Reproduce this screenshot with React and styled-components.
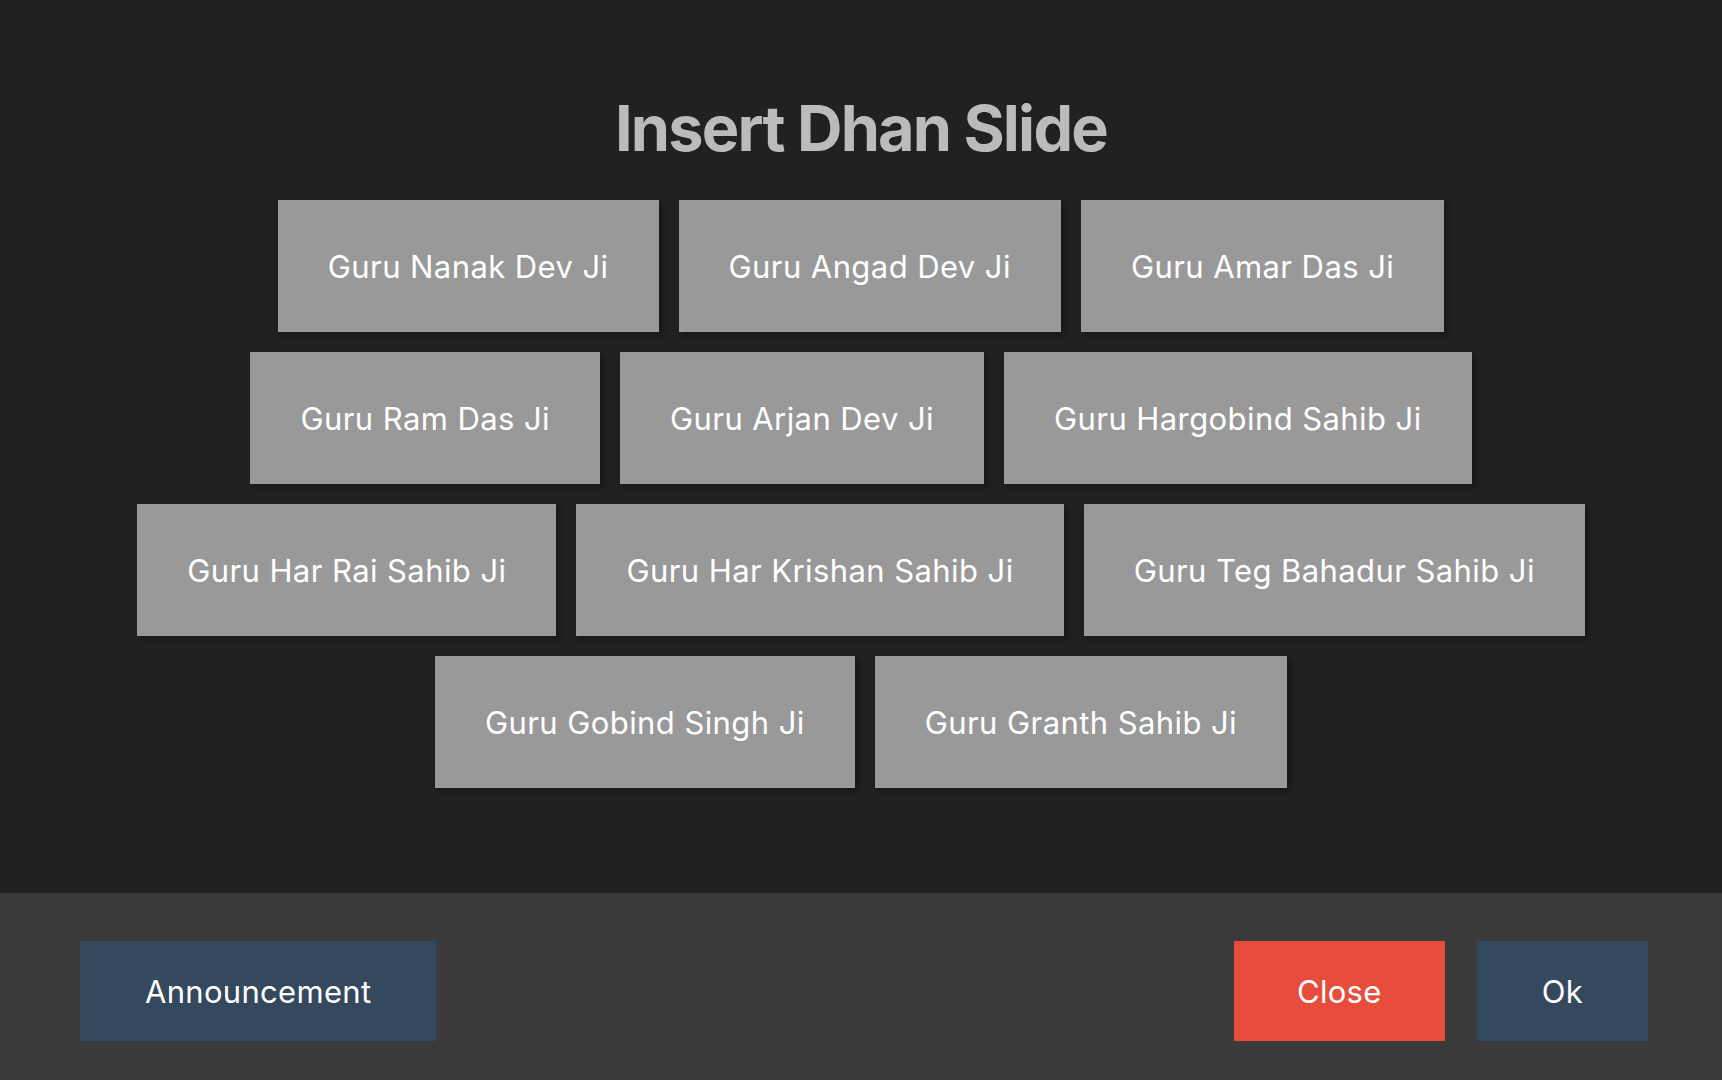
import styled, { createGlobalStyle } from 'styled-components'

const GlobalStyle = createGlobalStyle`
  html, body {
    margin: 0;
    padding: 0;
    background: #212121;
    font-family: Inter, 'Noto Sans', sans-serif;
  }
`

const gurus = [
  'Guru Nanak Dev Ji',
  'Guru Angad Dev Ji',
  'Guru Amar Das Ji',
  'Guru Ram Das Ji',
  'Guru Arjan Dev Ji',
  'Guru Hargobind Sahib Ji',
  'Guru Har Rai Sahib Ji',
  'Guru Har Krishan Sahib Ji',
  'Guru Teg Bahadur Sahib Ji',
  'Guru Gobind Singh Ji',
  'Guru Granth Sahib Ji'
]

export default function App() {
  return (
    <>
      <GlobalStyle />
      <Page>
        <Main>
          <Title>Insert Dhan Slide</Title>
          <Grid>
            {gurus.map(name => (
              <GuruBtn key={name}>{name}</GuruBtn>
            ))}
          </Grid>
        </Main>
        <Footer>
          <ActionBtn $variant="blue">Announcement</ActionBtn>
          <Right>
            <ActionBtn $variant="red">Close</ActionBtn>
            <ActionBtn $variant="blue">Ok</ActionBtn>
          </Right>
        </Footer>
      </Page>
    </>
  )
}

const Page = styled.div`
  height: 100vh;
  display: flex;
  flex-direction: column;
`

const Main = styled.div`
  flex: 1;
  display: flex;
  flex-direction: column;
  align-items: center;
  background: #212121;
`

const Title = styled.h1`
  margin: 90px 0 0;
  height: 110px;
  font-size: 63px;
  line-height: 76px;
  font-weight: 700;
  letter-spacing: -1.8px;
  color: #bbbbbb;
`

const Grid = styled.div`
  width: 1490px;
  display: flex;
  flex-wrap: wrap;
  justify-content: center;
  gap: 20px;
`

const GuruBtn = styled.button`
  height: 132px;
  padding: 0 50px;
  border: none;
  background: #999999;
  color: #ffffff;
  font-family: Inter, 'Noto Sans', sans-serif;
  font-size: 31px;
  letter-spacing: 0.42px;
  box-shadow: 3px 3px 6px rgba(0, 0, 0, 0.35);
  cursor: pointer;
`

const Footer = styled.div`
  height: 187px;
  box-sizing: border-box;
  background: #3a3a3a;
  display: flex;
  align-items: flex-start;
  justify-content: space-between;
  padding: 48px 74px 0 80px;
`

const Right = styled.div`
  display: flex;
  gap: 32px;
`

const ActionBtn = styled.button`
  height: 100px;
  padding: 0 ${p => (p.$variant === 'red' ? '63px' : '65px')};
  border: none;
  background: ${p => (p.$variant === 'red' ? '#e74c3c' : '#34495e')};
  color: #ffffff;
  font-family: Inter, 'Noto Sans', sans-serif;
  font-size: 31px;
  letter-spacing: 0.3px;
  cursor: pointer;
`
